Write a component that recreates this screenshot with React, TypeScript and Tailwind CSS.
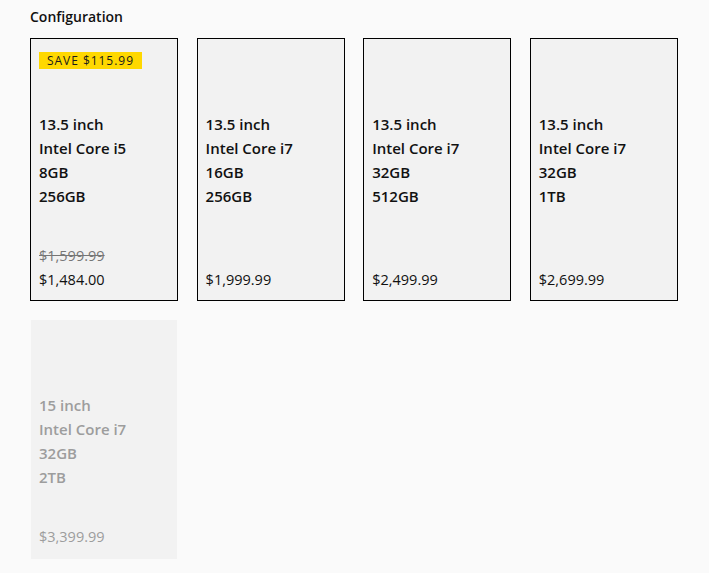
const configs = [
  { size: "13.5 inch", cpu: "Intel Core i5", ram: "8GB", storage: "256GB", was: "$1,599.99", price: "$1,484.00", save: "SAVE $115.99" },
  { size: "13.5 inch", cpu: "Intel Core i7", ram: "16GB", storage: "256GB", price: "$1,999.99" },
  { size: "13.5 inch", cpu: "Intel Core i7", ram: "32GB", storage: "512GB", price: "$2,499.99" },
  { size: "13.5 inch", cpu: "Intel Core i7", ram: "32GB", storage: "1TB", price: "$2,699.99" },
  { size: "15 inch", cpu: "Intel Core i7", ram: "32GB", storage: "2TB", price: "$3,399.99", disabled: true },
];

export default function App() {
  return (
    <div className="min-h-screen bg-[#fafafa] px-[30px] pt-[7px] font-['Open_Sans',sans-serif] text-[#111]">
      <h2 className="mb-[11px] text-[14px] leading-5 font-semibold">Configuration</h2>
      <div className="grid grid-cols-[repeat(4,148px)] items-start gap-x-[18.6px] gap-y-[18px]">
        {configs.map((c, i) => (
          <div
            key={i}
            className={
              c.disabled
                ? "flex flex-col border border-[#fafafa] bg-[#f2f2f2] px-2 pt-2 pb-[10px] text-[#9d9d9d]"
                : "flex h-full flex-col border border-black bg-[#f2f2f2] px-2 pt-2 pb-2"
            }
          >
            <div className="h-[65px]">
              {c.save && (
                <span className="mt-[5px] inline-block bg-[#ffd800] px-2 text-[12px] leading-[17px] tracking-[0.08em] text-[#1a1a1a]">
                  {c.save}
                </span>
              )}
            </div>
            <div className="text-[15px] leading-6 font-semibold">
              <div>{c.size}</div>
              <div>{c.cpu}</div>
              <div>{c.ram}</div>
              <div>{c.storage}</div>
            </div>
            <div className="mt-auto pt-9 text-[14.5px] leading-6">
              {c.was && <div className="text-[#767676] line-through">{c.was}</div>}
              <div>{c.price}</div>
            </div>
          </div>
        ))}
      </div>
    </div>
  );
}
